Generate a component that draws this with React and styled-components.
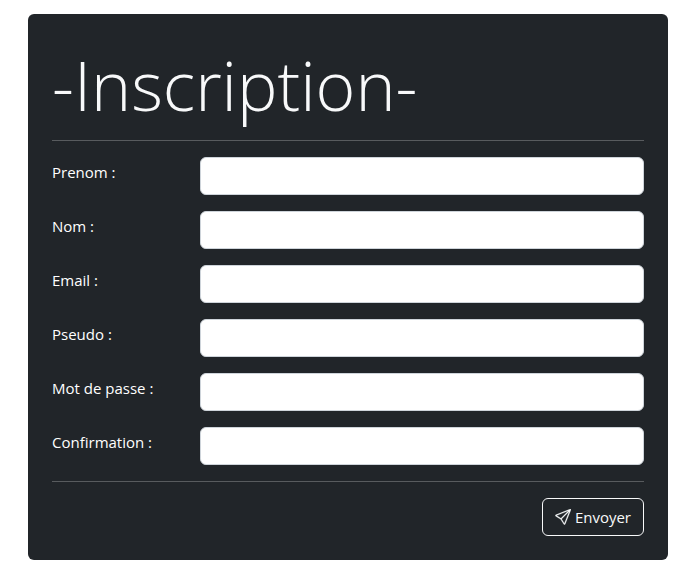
import React from "react";
import styled, { createGlobalStyle } from "styled-components";

const GlobalStyle = createGlobalStyle`
  *, *::before, *::after { box-sizing: border-box; }
  body {
    margin: 0;
    background: #fff;
    color: #fff;
    font: 400 16px/24px "Segoe UI", "Open Sans", "Noto Sans", sans-serif;
  }
`;

const Page = styled.main`
  padding: 14px 18px 13px 28px;
`;

const Card = styled.form`
  padding: 24px;
  border-radius: 6px;
  background: #212529;
`;

const Title = styled.h1`
  margin: 0;
  padding-bottom: 8px;
  color: #f8f9fa;
  font-family: "Segoe UI", "Open Sans", sans-serif;
  font-size: 68px;
  font-weight: 320;
  line-height: 94px;
  white-space: nowrap;
`;

const Divider = styled.hr`
  height: 1px;
  margin: 0 0 16px;
  border: 0;
  background: #585b5e;
`;

const Field = styled.div`
  display: grid;
  grid-template-columns: 1fr 3fr;
  align-items: start;
  margin-bottom: 16px;
`;

const Label = styled.label`
  padding-top: 3px;
  font-size: 15px;
  white-space: nowrap;
`;

const Input = styled.input`
  width: 100%;
  height: 38px;
  padding: 6px 12px;
  border: 1px solid #ced4da;
  border-radius: 6px;
  background: #fff;
  color: #212529;
  font: inherit;
`;

const Actions = styled.div`
  display: flex;
  justify-content: flex-end;
`;

const Button = styled.button`
  display: flex;
  align-items: center;
  gap: 4px;
  height: 38px;
  padding: 0 12px;
  border: 1px solid #f8f9fa;
  border-radius: 6px;
  background: transparent;
  color: #f8f9fa;
  font: inherit;
  font-size: 15px;
  cursor: pointer;
`;

const fields = [
  { id: "prenom", label: "Prenom :", type: "text" },
  { id: "nom", label: "Nom :", type: "text" },
  { id: "email", label: "Email :", type: "email" },
  { id: "pseudo", label: "Pseudo :", type: "text" },
  { id: "password", label: "Mot de passe :", type: "password" },
  { id: "confirmation", label: "Confirmation :", type: "password" },
];

function SendIcon() {
  return (
    <svg width="16" height="16" viewBox="0 0 16 16" fill="currentColor" stroke="currentColor" strokeWidth="0.25" aria-hidden="true">
      <path d="M15.854.146a.5.5 0 0 1 .11.54l-5.819 14.547a.75.75 0 0 1-1.329.124l-3.178-4.995L.643 7.184a.75.75 0 0 1 .124-1.33L15.314.037a.5.5 0 0 1 .54.11ZM6.636 10.07l2.761 4.338L14.13 2.576 6.636 10.07Zm6.787-8.201L1.591 6.602l4.339 2.76 7.494-7.493Z" />
    </svg>
  );
}

export default function App() {
  return (
    <>
      <GlobalStyle />
      <Page>
        <Card onSubmit={(event) => event.preventDefault()}>
          <Title>-Inscription-</Title>
          <Divider />
          {fields.map(({ id, label, type }) => (
            <Field key={id}>
              <Label htmlFor={id}>{label}</Label>
              <Input id={id} name={id} type={type} />
            </Field>
          ))}
          <Divider />
          <Actions>
            <Button type="submit">
              <SendIcon />
              Envoyer
            </Button>
          </Actions>
        </Card>
      </Page>
    </>
  );
}
